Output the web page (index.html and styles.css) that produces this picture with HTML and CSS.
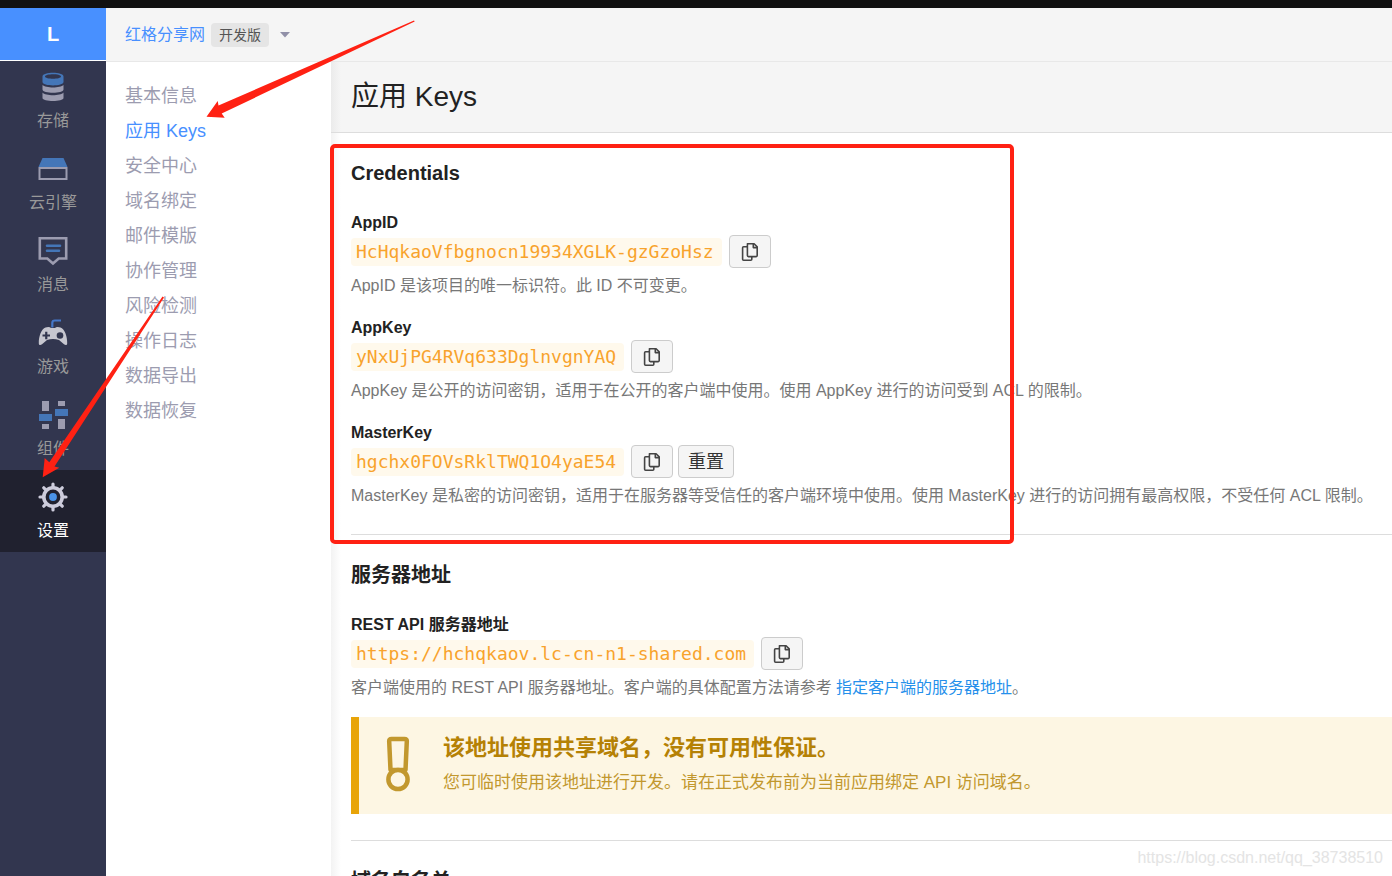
FILE: index.html
```html
<!DOCTYPE html>
<html lang="zh-CN">
<head>
<meta charset="utf-8">
<title>应用 Keys</title>
<link rel="stylesheet" href="styles.css">
</head>
<body>
<svg class="sprite" aria-hidden="true">
  <symbol id="copy" viewBox="0 0 18 20">
    <g fill="none" stroke="#444" stroke-width="1.6" stroke-linejoin="round">
      <path d="M6.400 1.800h6.700l3.100 3.100v8.700a1 1 0 0 1-1 1H7.400a1 1 0 0 1-1-1V2.800a1 1 0 0 1 1-1z"/>
      <path d="M12.300 1.800v3.800h3.900"/>
      <path d="M6.400 4.800H2.600a1 1 0 0 0-1 1v11.400a1 1 0 0 0 1 1h7.200a1 1 0 0 0 1-1v-2.600"/>
    </g>
  </symbol>
</svg>
<div class="topstrip"></div>
<div class="app">
  <nav class="rail">
    <a class="logo" href="#">L</a>
    <a class="rail-item" href="#">
      <svg width="30" height="30" viewBox="0 0 30 30"><path fill="#9c9cb0" d="M4.500 20.500c3 3.600 18 3.600 21 0v5.500c0 4-21 4-21 0zM4.500 13c3 3.300 18 3.300 21 0v4.500c0 4.300-21 4.300-21 0z"/><path fill="#4476b8" fill-rule="evenodd" d="M4.500 4.500c0-5 21-5 21 0v5.500c0 4.500-21 4.500-21 0zM7 4.500c0 3 16 3 16 0s-16-3-16 0z"/></svg>
      <span>存储</span>
    </a>
    <a class="rail-item" href="#">
      <svg width="30" height="30" viewBox="0 0 30 30"><path fill="#4476b8" d="M4.500 4h21L29.500 13H.5z"/><path fill="none" stroke="#9c9cb0" stroke-width="2" d="M1.500 14h27v11h-27z"/></svg>
      <span>云引擎</span>
    </a>
    <a class="rail-item" href="#">
      <svg width="30" height="30" viewBox="0 0 30 30"><path fill="none" stroke="#9c9cb0" stroke-width="2.600" d="M1.800 2.300h26.400v20.200h-7.500L15 27.500l-5.700-5H1.800z"/><path stroke="#4476b8" stroke-width="2.600" stroke-linecap="round" d="M9 9.700h13M9 14.700h12"/></svg>
      <span>消息</span>
    </a>
    <a class="rail-item" href="#">
      <svg width="30" height="30" viewBox="0 0 30 30"><path fill="none" stroke="#4476c8" stroke-width="2.200" d="M14.300 9.500V5q0-2.500 2.500-2.500H23"/><path fill="#c6c6cf" d="M7.500 9.500q4-1 5.500.5h4q1.500-1.500 5.500-.5c4 1 7 9 6.700 16-.2 2-2 1.700-3.200.7l-5-4.200q-6-2-12 0l-5 4.200c-1.200 1-3 1.300-3.200-.7-.3-7 2.700-15 6.700-16z"/><path stroke="#32364f" stroke-width="2.200" d="M4.500 17.500h7.500M8.250 13.700v7.500"/><circle cx="22" cy="17.500" r="3.300" fill="#32364f"/></svg>
      <span>游戏</span>
    </a>
    <a class="rail-item" href="#">
      <svg width="30" height="30" viewBox="0 0 30 30"><path fill="#9c9cb0" d="M4 1h7v10H4zM4 24h7v5H4zM20 1h7v5h-7zM20 19h7v10h-7z"/><path fill="#4476b8" d="M1 14h13v7H1zM17 9h13v7H17z"/></svg>
      <span>组件</span>
    </a>
    <a class="rail-item active" href="#">
      <svg width="30" height="30" viewBox="0 0 30 30"><g stroke="#cdccdc" fill="none"><circle cx="15" cy="15" r="9.200" stroke-width="3.600"/><path stroke-width="3.200" stroke-linecap="round" d="M15 2v3M15 25v3M2 15h3M25 15h3M5.800 5.800l2 2M22.200 22.200l2 2M5.800 24.200l2-2M22.200 7.800l2-2"/></g><circle cx="15" cy="15" r="3.900" fill="#4a93e8"/></svg>
      <span>设置</span>
    </a>
  </nav>
  <div class="body">
    <header class="appbar">
      <a class="app-name" href="#">红格分享网</a>
      <span class="plan">开发版</span>
      <button class="caret" type="button" aria-label="切换应用"><svg width="10" height="6" viewBox="0 0 10 6"><path fill="#9190a8" d="M0 0h10L5 5.500z"/></svg></button>
    </header>
    <div class="columns">
      <nav class="menu">
        <a href="#">基本信息</a>
        <a class="current" href="#">应用 Keys</a>
        <a href="#">安全中心</a>
        <a href="#">域名绑定</a>
        <a href="#">邮件模版</a>
        <a href="#">协作管理</a>
        <a href="#">风险检测</a>
        <a href="#">操作日志</a>
        <a href="#">数据导出</a>
        <a href="#">数据恢复</a>
      </nav>
      <main class="main">
        <h1>应用 Keys</h1>
        <section>
          <h2>Credentials</h2>
          <div class="field">
            <h3>AppID</h3>
            <div class="value"><code>HcHqkaoVfbgnocn19934XGLK-gzGzoHsz</code><button class="btn" type="button" aria-label="复制 AppID"><svg width="18" height="20"><use href="#copy"/></svg></button></div>
            <p>AppID 是该项目的唯一标识符。此 ID 不可变更。</p>
          </div>
          <div class="field">
            <h3>AppKey</h3>
            <div class="value"><code>yNxUjPG4RVq633DglnvgnYAQ</code><button class="btn" type="button" aria-label="复制 AppKey"><svg width="18" height="20"><use href="#copy"/></svg></button></div>
            <p>AppKey 是公开的访问密钥，适用于在公开的客户端中使用。使用 AppKey 进行的访问受到 ACL 的限制。</p>
          </div>
          <div class="field">
            <h3>MasterKey</h3>
            <div class="value"><code>hgchx0FOVsRklTWQ1O4yaE54</code><button class="btn" type="button" aria-label="复制 MasterKey"><svg width="18" height="20"><use href="#copy"/></svg></button><button class="btn text" type="button">重置</button></div>
            <p>MasterKey 是私密的访问密钥，适用于在服务器等受信任的客户端环境中使用。使用 MasterKey 进行的访问拥有最高权限，不受任何 ACL 限制。</p>
          </div>
        </section>
        <section>
          <h2>服务器地址</h2>
          <div class="field">
            <h3>REST API 服务器地址</h3>
            <div class="value"><code>https://hchqkaov.lc-cn-n1-shared.com</code><button class="btn" type="button" aria-label="复制服务器地址"><svg width="18" height="20"><use href="#copy"/></svg></button></div>
            <p>客户端使用的 REST API 服务器地址。客户端的具体配置方法请参考 <a href="#">指定客户端的服务器地址</a>。</p>
          </div>
          <div class="notice">
            <svg width="26" height="56" viewBox="0 0 26 56"><g fill="none" stroke="#c2982e" stroke-width="4.500"><path stroke-linejoin="round" d="M6.500 3h13q2.500 0 2.300 2.500L20.500 34h-15L4.200 5.500Q4 3 6.500 3z"/><circle cx="13" cy="43.500" r="9.600" fill="#fdf6e3"/></g></svg>
            <div>
              <strong>该地址使用共享域名，没有可用性保证。</strong>
              <p>您可临时使用该地址进行开发。请在正式发布前为当前应用绑定 API 访问域名。</p>
            </div>
          </div>
        </section>
        <section>
          <h2>域名白名单</h2>
        </section>
      </main>
    </div>
  </div>
</div>
<svg class="marks" width="1392" height="876" viewBox="0 0 1392 876" aria-hidden="true">
  <rect x="332" y="146" width="680" height="396" rx="3" fill="none" stroke="#ff2113" stroke-width="4"/>
  <path fill="#ff2113" d="M206.500 116.700L217.700 101l.8 4.500L414 20.500l.7 1L221.700 113.500l3 4.200zM42.700 477.300L44.700 458l4.600 4.300L162.500 296.500l1.500 1L54.500 466.500l4.800 1.200z"/>
</svg>
<div class="watermark">https://blog.csdn.net/qq_38738510</div>
</body>
</html>
```

FILE: styles.css
```css
* { box-sizing: border-box; }
body, h1, h2, h3, p { margin: 0; }
body {
  height: 100vh;
  display: flex;
  flex-direction: column;
  overflow: hidden;
  position: relative;
  background: #fff;
  color: #222;
  font: 16px/24px "Liberation Sans", "Noto Sans CJK SC", sans-serif;
}
a { color: inherit; text-decoration: none; }
svg { display: block; flex: none; }
.sprite { position: absolute; width: 0; height: 0; }
.topstrip { height: 8px; flex: none; background: #111; }
.app { flex: 1; min-height: 0; display: flex; }

.rail { width: 106px; flex: none; background: #32364f; color: #999; }
.logo {
  height: 52px;
  display: flex;
  align-items: center;
  justify-content: center;
  background: #4890ff;
  color: #fff;
  font-size: 20px;
  font-weight: bold;
}
.rail-item {
  height: 82px;
  display: flex;
  flex-direction: column;
  align-items: center;
  gap: 7px;
  padding-top: 12px;
}
.logo + .rail-item { border-top: 1px solid #fff; padding-top: 11px; }
.rail-item.active { background: #20212f; color: #fff; }

.body { flex: 1; min-width: 0; display: flex; flex-direction: column; }
.appbar {
  height: 54px;
  flex: none;
  display: flex;
  align-items: center;
  padding-left: 19px;
  border-bottom: 1px solid #e8e8e8;
  background: #f5f5f5;
}
.app-name { color: #4890ff; }
.plan {
  margin: 0 9px 0 6px;
  padding: 0 8px;
  border-radius: 4px;
  background: #e5e5e5;
  color: #555;
  font-size: 14px;
}
.caret { padding: 2px; border: 0; background: none; }
.columns { flex: 1; min-height: 0; display: flex; }
.menu {
  width: 225px;
  flex: none;
  display: flex;
  flex-direction: column;
  padding: 17px 19px;
  color: #9c9cb0;
  font-size: 18px;
  line-height: 35px;
}
.menu .current { color: #4890ff; }

.main {
  flex: 1;
  min-width: 0;
  overflow: hidden;
  background: linear-gradient(to right, #f3f3f3, #fff 10px);
}
h1 {
  padding: 15px 20px;
  border-bottom: 1px solid #ddd;
  background: linear-gradient(to right, #ebebeb, #f5f5f5 10px);
  font-size: 28px;
  line-height: 40px;
  font-weight: 400;
}
section { margin-left: 20px; padding: 26px 0; }
section + section { border-top: 1px solid #ddd; }
h2 { margin-bottom: 24px; font-size: 20px; line-height: 28px; }
h3 { font-size: 16px; line-height: 24px; }
.field + .field { margin-top: 18px; }
.field p { margin-top: 6px; color: #777; }
.field p a { color: #2590eb; }
.value { display: flex; align-items: center; gap: 5px; height: 33px; }
code {
  margin-right: 2px;
  padding: 0 8px 0 5px;
  border-radius: 4px;
  background: #fff9ec;
  color: #f8a32c;
  font: 18px/28px "DejaVu Sans Mono", monospace;
}
.btn {
  height: 33px;
  display: flex;
  align-items: center;
  padding: 0 11px;
  border: 1px solid #ccc;
  border-radius: 4px;
  background: #f5f5f5;
  color: #333;
  font: 18px/24px "Liberation Sans", "Noto Sans CJK SC", sans-serif;
}
.btn.text { padding: 0 9px; }
.notice {
  display: flex;
  gap: 32px;
  margin-top: 17px;
  padding: 16px 26px 17px;
  border-left: 8px solid #e8a408;
  background: #fdf6e3;
  color: #c2982e;
}
.notice svg { margin-top: 3px; }
.notice strong { display: block; color: #b58105; font-size: 22px; line-height: 30px; }
.notice p { margin-top: 6px; font-size: 17px; line-height: 28px; }

.marks { position: absolute; left: 0; top: 0; pointer-events: none; }
.watermark {
  position: absolute;
  right: 9px;
  bottom: 6px;
  color: #e4e4e4;
}
```
